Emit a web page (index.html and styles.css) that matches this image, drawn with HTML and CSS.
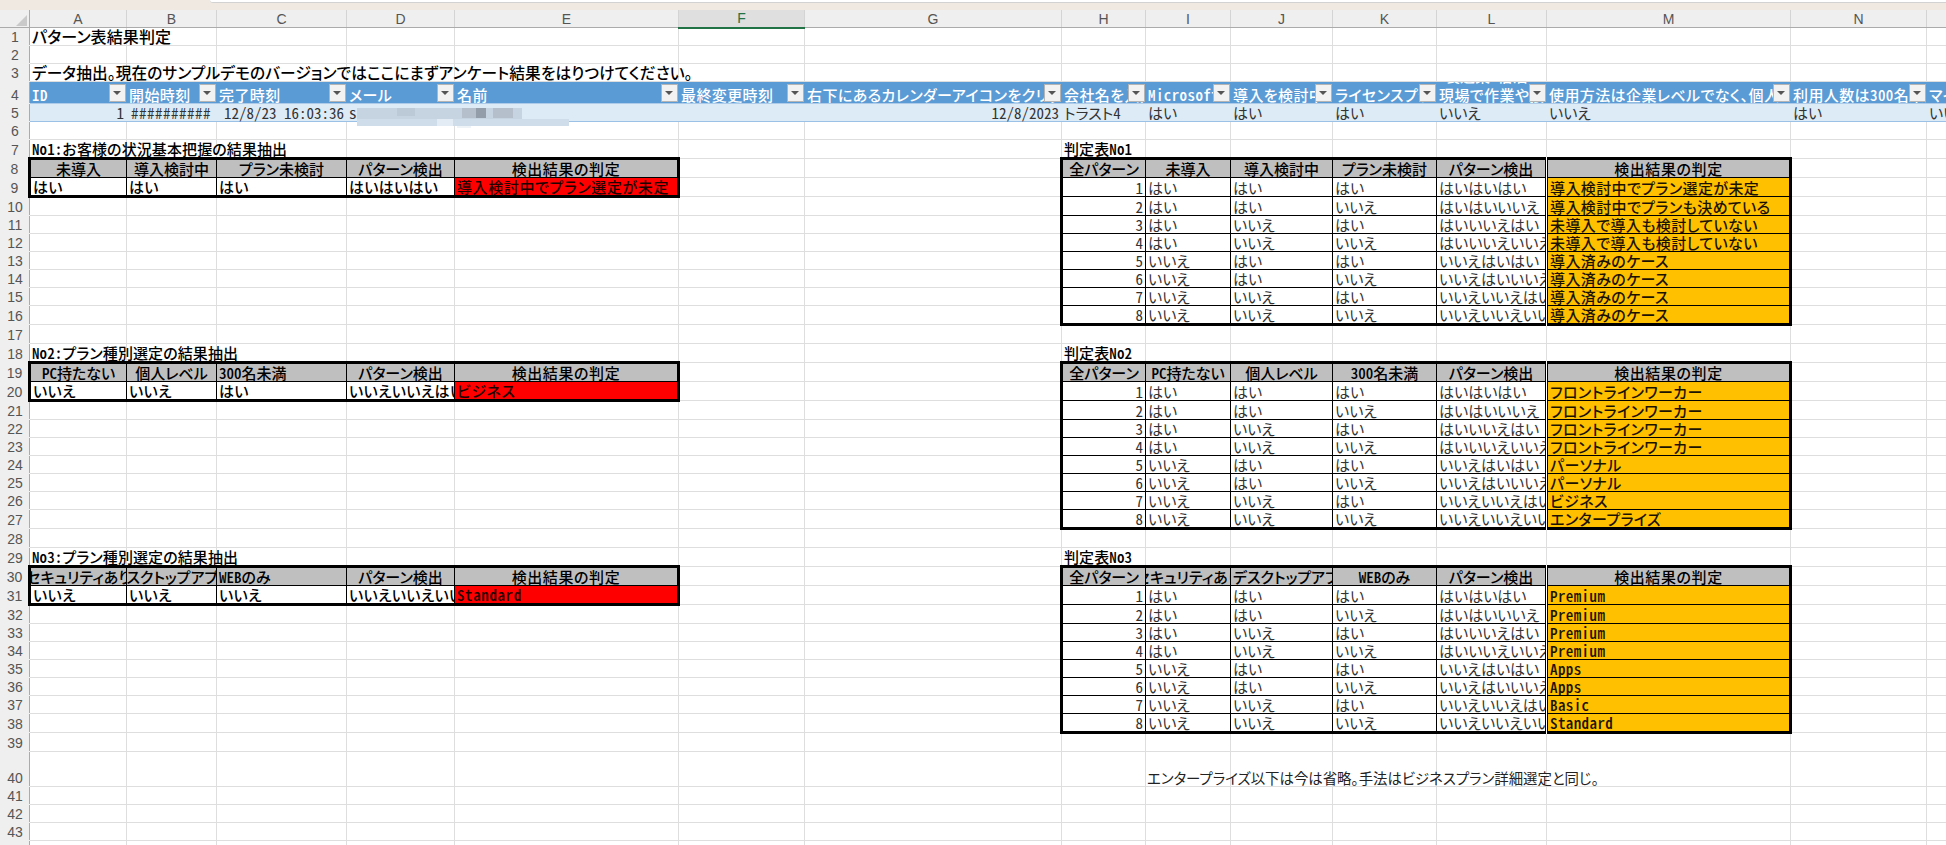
FILE: index.html
```html
<!DOCTYPE html>
<html lang="ja">
<head>
<meta charset="utf-8">
<title>パターン表結果判定</title>
<link rel="stylesheet" href="styles.css">
</head>
<body>
<div class="titlebar"><div class="tab"></div></div>
<table class="sheet">
<colgroup><col class="w-rn"><col class="w-a"><col class="w-b"><col class="w-c"><col class="w-d"><col class="w-e"><col class="w-f"><col class="w-g"><col class="w-h"><col class="w-i"><col class="w-j"><col class="w-k"><col class="w-l"><col class="w-m"><col class="w-n"><col class="w-o"></colgroup>
<tr class="colhead"><th class="corner"><svg class="tri" width="11" height="11" viewBox="0 0 11 11"><path d="M11 0V11H0Z"/></svg></th><th>A<th>B<th>C<th>D<th>E<th class="sel">F<th>G<th>H<th>I<th>J<th>K<th>L<th>M<th>N<th></tr>
<tr class="h18"><th>1<td class="big t1">パターン表結果判定<td><td><td><td><td><td><td><td><td><td><td><td><td><td></tr>
<tr class="h18"><th>2<td><td><td><td><td><td><td><td><td><td><td><td><td><td><td></tr>
<tr class="h18"><th>3<td class="big t3">データ抽出。現在のサンプルデモのバージョンではここにまずアンケート結果をはりつけてください。<td><td><td><td><td><td><td><td><td><td><td><td><td><td></tr>
<tr class="h22 lhead"><th>4<td>ID<i class="fb"></i><td>開始時刻<i class="fb"></i><td>完了時刻<i class="fb"></i><td>メール<i class="fb"></i><td>名前<i class="fb"></i><td>最終変更時刻<i class="fb"></i><td>右下にあるカレンダーアイコンをクリックして<i class="fb"></i><td>会社名を入力してください<i class="fb"></i><td>Microsoft 365<i class="fb"></i><td>導入を検討中ですか<i class="fb"></i><td>ライセンスプランは<i class="fb"></i><td><span class="wrapped">製造業・宿泊</span>現場で作業や接客<i class="fb"></i><td>使用方法は企業レベルでなく、個人ですか<i class="fb"></i><td>利用人数は300名未満ですか<i class="fb"></i><td>マイクロソフト</tr>
<tr class="h18 lrow"><th>5<td class="num">1<td class="hash">##########<td class="num">12/8/23 16:03:36<td class="mail">s<svg class="mosaic" width="212" height="20" viewBox="0 0 212 20"><g><rect x="0" y="0" width="165" height="11" fill="#c6d4e2"/><rect x="0" y="11" width="212" height="7" fill="#cfdcea"/><rect x="100" y="18" width="14" height="2" fill="#eef3f8"/><rect x="105" y="0" width="14" height="10" fill="#b4bfcb"/><rect x="119" y="0" width="10" height="10" fill="#929da9"/><rect x="136" y="0" width="20" height="10" fill="#b4bfcb"/><rect x="40" y="0" width="18" height="8" fill="#bccad8"/><rect x="80" y="11" width="16" height="7" fill="#e3ecf5"/></g></svg><td>&nbsp;<td><td class="num">12/8/2023<td>トラスト4<td>はい<td>はい<td>はい<td>いいえ<td>いいえ<td>はい<td>いいえ</tr>
<tr class="h18"><th>6<td><td><td><td><td><td><td><td><td><td><td><td><td><td><td></tr>
<tr class="h19"><th>7<td class="big">No1:お客様の状況基本把握の結果抽出<td><td><td><td><td><td><td class="big">判定表No1<td><td><td><td><td><td><td></tr>
<tr class="h19"><th>8<td class="gh T L">未導入<td class="gh T">導入検討中<td class="gh T">プラン未検討<td class="gh T">パターン検出<td class="gh T R">検出結果の判定<td><td><td class="gh T L">全パターン<td class="gh T">未導入<td class="gh T">導入検討中<td class="gh T">プラン未検討<td class="gh T">パターン検出<td class="gh T R D">検出結果の判定<td><td></tr>
<tr class="h19"><th>9<td class="v B L">はい<td class="v B">はい<td class="v B">はい<td class="v B">はいはいはい<td class="red B R">導入検討中でプラン選定が未定<td><td><td class="c L num">1<td class="c">はい<td class="c">はい<td class="c">はい<td class="c">はいはいはい<td class="org R D">導入検討中でプラン選定が未定<td><td></tr>
<tr class="h19"><th>10<td><td><td><td><td><td><td><td class="c L num">2<td class="c">はい<td class="c">はい<td class="c">いいえ<td class="c">はいはいいいえ<td class="org R D">導入検討中でプランも決めている<td><td></tr>
<tr class="h18"><th>11<td><td><td><td><td><td><td><td class="c L num">3<td class="c">はい<td class="c">いいえ<td class="c">はい<td class="c">はいいいえはい<td class="org R D">未導入で導入も検討していない<td><td></tr>
<tr class="h18"><th>12<td><td><td><td><td><td><td><td class="c L num">4<td class="c">はい<td class="c">いいえ<td class="c">いいえ<td class="c">はいいいえいいえ<td class="org R D">未導入で導入も検討していない<td><td></tr>
<tr class="h18"><th>13<td><td><td><td><td><td><td><td class="c L num">5<td class="c">いいえ<td class="c">はい<td class="c">はい<td class="c">いいえはいはい<td class="org R D">導入済みのケース<td><td></tr>
<tr class="h18"><th>14<td><td><td><td><td><td><td><td class="c L num">6<td class="c">いいえ<td class="c">はい<td class="c">いいえ<td class="c">いいえはいいいえ<td class="org R D">導入済みのケース<td><td></tr>
<tr class="h18"><th>15<td><td><td><td><td><td><td><td class="c L num">7<td class="c">いいえ<td class="c">いいえ<td class="c">はい<td class="c">いいえいいえはい<td class="org R D">導入済みのケース<td><td></tr>
<tr class="h19"><th>16<td><td><td><td><td><td><td><td class="c L B num">8<td class="c B">いいえ<td class="c B">いいえ<td class="c B">いいえ<td class="c B">いいえいいえいいえ<td class="org R B D">導入済みのケース<td><td></tr>
<tr class="h19"><th>17<td><td><td><td><td><td><td><td><td><td><td><td><td><td><td></tr>
<tr class="h19"><th>18<td class="big">No2:プラン種別選定の結果抽出<td><td><td><td><td><td><td class="big">判定表No2<td><td><td><td><td><td><td></tr>
<tr class="h19"><th>19<td class="gh T L">PC持たない<td class="gh T">個人レベル<td class="gh T start">300名未満<td class="gh T">パターン検出<td class="gh T R">検出結果の判定<td><td><td class="gh T L">全パターン<td class="gh T">PC持たない<td class="gh T">個人レベル<td class="gh T">300名未満<td class="gh T">パターン検出<td class="gh T R D">検出結果の判定<td><td></tr>
<tr class="h19"><th>20<td class="v B L">いいえ<td class="v B">いいえ<td class="v B">はい<td class="v B">いいえいいえはい<td class="red B R">ビジネス<td><td><td class="c L num">1<td class="c">はい<td class="c">はい<td class="c">はい<td class="c">はいはいはい<td class="org R D">フロントラインワーカー<td><td></tr>
<tr class="h19"><th>21<td><td><td><td><td><td><td><td class="c L num">2<td class="c">はい<td class="c">はい<td class="c">いいえ<td class="c">はいはいいいえ<td class="org R D">フロントラインワーカー<td><td></tr>
<tr class="h18"><th>22<td><td><td><td><td><td><td><td class="c L num">3<td class="c">はい<td class="c">いいえ<td class="c">はい<td class="c">はいいいえはい<td class="org R D">フロントラインワーカー<td><td></tr>
<tr class="h18"><th>23<td><td><td><td><td><td><td><td class="c L num">4<td class="c">はい<td class="c">いいえ<td class="c">いいえ<td class="c">はいいいえいいえ<td class="org R D">フロントラインワーカー<td><td></tr>
<tr class="h18"><th>24<td><td><td><td><td><td><td><td class="c L num">5<td class="c">いいえ<td class="c">はい<td class="c">はい<td class="c">いいえはいはい<td class="org R D">パーソナル<td><td></tr>
<tr class="h18"><th>25<td><td><td><td><td><td><td><td class="c L num">6<td class="c">いいえ<td class="c">はい<td class="c">いいえ<td class="c">いいえはいいいえ<td class="org R D">パーソナル<td><td></tr>
<tr class="h18"><th>26<td><td><td><td><td><td><td><td class="c L num">7<td class="c">いいえ<td class="c">いいえ<td class="c">はい<td class="c">いいえいいえはい<td class="org R D">ビジネス<td><td></tr>
<tr class="h19"><th>27<td><td><td><td><td><td><td><td class="c L B num">8<td class="c B">いいえ<td class="c B">いいえ<td class="c B">いいえ<td class="c B">いいえいいえいいえ<td class="org R B D">エンタープライズ<td><td></tr>
<tr class="h19"><th>28<td><td><td><td><td><td><td><td><td><td><td><td><td><td><td></tr>
<tr class="h19"><th>29<td class="big">No3:プラン種別選定の結果抽出<td><td><td><td><td><td><td class="big">判定表No3<td><td><td><td><td><td><td></tr>
<tr class="h19"><th>30<td class="gh T L"><span class="mid">セキュリティあり</span><td class="gh T"><span class="mid">デスクトップアプリ</span><td class="gh T start">WEBのみ<td class="gh T">パターン検出<td class="gh T R">検出結果の判定<td><td><td class="gh T L">全パターン<td class="gh T"><span class="mid">セキュリティあり</span><td class="gh T start">デスクトップアプリ<td class="gh T">WEBのみ<td class="gh T">パターン検出<td class="gh T R D">検出結果の判定<td><td></tr>
<tr class="h19"><th>31<td class="v B L">いいえ<td class="v B">いいえ<td class="v B">いいえ<td class="v B">いいえいいえいいえ<td class="red B R">Standard<td><td><td class="c L num">1<td class="c">はい<td class="c">はい<td class="c">はい<td class="c">はいはいはい<td class="org R D">Premium<td><td></tr>
<tr class="h19"><th>32<td><td><td><td><td><td><td><td class="c L num">2<td class="c">はい<td class="c">はい<td class="c">いいえ<td class="c">はいはいいいえ<td class="org R D">Premium<td><td></tr>
<tr class="h18"><th>33<td><td><td><td><td><td><td><td class="c L num">3<td class="c">はい<td class="c">いいえ<td class="c">はい<td class="c">はいいいえはい<td class="org R D">Premium<td><td></tr>
<tr class="h18"><th>34<td><td><td><td><td><td><td><td class="c L num">4<td class="c">はい<td class="c">いいえ<td class="c">いいえ<td class="c">はいいいえいいえ<td class="org R D">Premium<td><td></tr>
<tr class="h18"><th>35<td><td><td><td><td><td><td><td class="c L num">5<td class="c">いいえ<td class="c">はい<td class="c">はい<td class="c">いいえはいはい<td class="org R D">Apps<td><td></tr>
<tr class="h18"><th>36<td><td><td><td><td><td><td><td class="c L num">6<td class="c">いいえ<td class="c">はい<td class="c">いいえ<td class="c">いいえはいいいえ<td class="org R D">Apps<td><td></tr>
<tr class="h18"><th>37<td><td><td><td><td><td><td><td class="c L num">7<td class="c">いいえ<td class="c">いいえ<td class="c">はい<td class="c">いいえいいえはい<td class="org R D">Basic<td><td></tr>
<tr class="h19"><th>38<td><td><td><td><td><td><td><td class="c L B num">8<td class="c B">いいえ<td class="c B">いいえ<td class="c B">いいえ<td class="c B">いいえいいえいいえ<td class="org R B D">Standard<td><td></tr>
<tr class="h19"><th>39<td><td><td><td><td><td><td><td><td><td><td><td><td><td><td></tr>
<tr class="h35"><th>40<td><td><td><td><td><td><td><td><td class="note">エンタープライズ以下は今は省略。手法はビジネスプラン詳細選定と同じ。<td><td><td><td><td><td></tr>
<tr class="h18"><th>41<td><td><td><td><td><td><td><td><td><td><td><td><td><td><td></tr>
<tr class="h18"><th>42<td><td><td><td><td><td><td><td><td><td><td><td><td><td><td></tr>
<tr class="h18"><th>43<td><td><td><td><td><td><td><td><td><td><td><td><td><td><td></tr>
<tr class="h18"><th><td><td><td><td><td><td><td><td><td><td><td><td><td><td><td></tr>
</table>
</body>
</html>
```
FILE: styles.css
```css
html, body {
  margin: 0;
  height: 100%;
  overflow: hidden;
  background: #fff;
}
body {
  font-family: "Noto Sans CJK JP", "Liberation Sans", sans-serif;
  font-size: 15px;
  font-feature-settings: "hwid", "palt";
  color: #000;
}
.titlebar {
  height: 10px;
  background: #efe9e2;
}
.tab {
  height: 2px;
  margin-left: 210px;
  background: #fff;
  border-bottom: 1px solid #d2d2d2;
  border-bottom-left-radius: 4px;
}
.sheet {
  table-layout: fixed;
  width: 2026px;
  border-collapse: collapse;
  line-height: 17px;
}
.w-rn { width: 29px; }
.w-a { width: 97px; }
.w-b { width: 90px; }
.w-c { width: 130px; }
.w-d { width: 108px; }
.w-e { width: 224px; }
.w-f { width: 126px; }
.w-g { width: 257px; }
.w-h { width: 84px; }
.w-i { width: 85px; }
.w-j { width: 102px; }
.w-k { width: 104px; }
.w-l { width: 110px; }
.w-m { width: 244px; }
.w-n { width: 136px; }
.w-o { width: 100px; }

.h18 { height: 18px; }
.h19 { height: 19px; }
.h22 { height: 22px; }
.h35 { height: 35px; }

td {
  padding: 0 2px;
  border: 1px solid #dedede;
  vertical-align: bottom;
  white-space: nowrap;
  font-weight: 400;
}
th {
  padding: 0;
  background: #efefef;
  font: 400 14px/16px "Liberation Sans", sans-serif;
  color: #555;
  vertical-align: bottom;
  text-align: center;
  border: 1px solid #efefef;
  border-right: 1px solid #ababab;
}
.colhead { height: 17px; }
.colhead th {
  vertical-align: middle;
  border-top: 0;
  border-right: 1px solid #d4d4d4;
  border-bottom: 1px solid #ababab;
  overflow: hidden;
}
.colhead .sel {
  background: #dfdfdf;
  color: #217346;
  border-bottom: 2px solid #217346;
}
.colhead .corner {
  text-align: right;
  vertical-align: bottom;
  border-right: 1px solid #ababab;
}
.tri {
  display: block;
  margin: 5px 2px 1px auto;
  fill: #c9c9c9;
}

.big { font-weight: 500; letter-spacing: 0.1px; }
.t1 { font-size: 16px; }
.t3 { font-size: 15.7px; }

.lhead td {
  position: relative;
  overflow: hidden;
  background: #5b9bd5;
  color: #fff;
  font-weight: 500;
  letter-spacing: 0.4px;
  border-color: #5b9bd5;
  border-bottom-color: #aecbe9;
}
.wrapped {
  position: absolute;
  left: 8px;
  top: -15px;
  letter-spacing: 0;
}
.fb {
  position: absolute;
  right: 0;
  bottom: 1px;
  width: 15px;
  height: 16px;
  background: #f2f2f2;
  border: 1px solid #b4b4b4;
}
.fb::after {
  content: "";
  position: absolute;
  left: 3px;
  top: 6px;
  border-style: solid;
  border-width: 4px 4px 0;
  border-color: #555 transparent transparent;
}
.lrow td {
  position: relative;
  background: #ddebf7;
  color: #333;
  border-color: #ddebf7;
  border-bottom-color: #9bc2e6;
}
.lrow .hash { padding-left: 4px; letter-spacing: 0.5px; }
.mail { overflow: visible; }
.mosaic {
  position: absolute;
  z-index: 1;
  left: 10px;
  top: 4px;
  filter: blur(0.7px);
}

.gh, .v, .c, .red, .org {
  overflow: hidden;
  border: 1px solid #000;
}
.gh {
  background: #bfbfbf;
  text-align: center;
  font-weight: 500;
  padding: 0;
}
.gh.R { letter-spacing: 0.6px; }
.gh.start { text-align: left; padding-left: 2px; }
.mid {
  display: flex;
  justify-content: center;
}
.v { background: #fff; font-weight: 500; letter-spacing: 0.3px; }
.c { background: #fff; color: #333; }
.red { background: #f00; font-weight: 500; color: #210000; letter-spacing: 0.6px; }
.org { background: #ffc000; font-weight: 500; color: #1b1300; letter-spacing: 0.4px; }
.num { text-align: right; }
.note { color: #222; padding-left: 1px; font-size: 14.4px; }

.T { border-top: 3px solid #000; }
.B { border-bottom: 3px solid #000; }
.L { border-left: 3px solid #000; }
.R { border-right: 3px solid #000; }
.D { border-left: 3px double #000; }
```
